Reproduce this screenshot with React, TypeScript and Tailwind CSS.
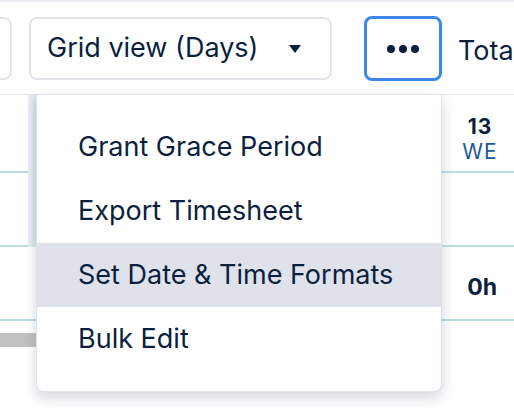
const MENU = ["Grant Grace Period", "Export Timesheet", "Set Date & Time Formats", "Bulk Edit"];

export default function App() {
  return (
    <div className="relative h-[408px] w-[514px] overflow-hidden bg-white font-['Inter',sans-serif] text-[#0b1f3f]">
      <div className="h-[2px] bg-[#eceef3]" />

      {/* toolbar */}
      <div className="flex h-[93px] items-start border-b border-[#e3e6ec] pt-[15px]">
        <div className="-ml-[100px] h-[63px] w-[112px] shrink-0 rounded-[8px] border-2 border-[#e1e4ea]" />
        <button className="ml-[17px] flex h-[63px] w-[303px] shrink-0 items-center justify-between rounded-[8px] border-2 border-[#e1e4ea] pl-[16px] pr-[29px] text-[27px]">
          <span>Grid view (Days)</span>
          <svg width="12" height="8" viewBox="0 0 12 8">
            <path d="M0 0h12L6 8z" fill="#0b1f3f" />
          </svg>
        </button>
        <button className="ml-[32px] flex h-[65px] w-[78px] shrink-0 -translate-y-[1px] items-center justify-center gap-[4px] rounded-[8px] border-[3px] border-[#3e87e8]">
          <span className="h-[8px] w-[8px] rounded-full bg-[#0b1f3f]" />
          <span className="h-[8px] w-[8px] rounded-full bg-[#0b1f3f]" />
          <span className="h-[8px] w-[8px] rounded-full bg-[#0b1f3f]" />
        </button>
        <span className="ml-[16px] mt-[14px] whitespace-nowrap text-[27px]">Total</span>
      </div>

      {/* grid rows */}
      <div className="relative">
        <div className="absolute left-[28px] top-0 h-[152px] w-[8px] bg-gradient-to-r from-[#eef1f5] to-[#dbe2ea]" />
        <div className="flex h-[78px] border-b-2 border-[#bcdbe2]">
          <div className="flex-1" />
          <div className="flex w-[66px] flex-col items-center pr-[2px] pt-[20px] text-[21px] leading-[23px]">
            <span className="font-bold tracking-[1px]">13</span>
            <span className="mt-[2px] tracking-[1px] text-[#17589a]">WE</span>
          </div>
        </div>
        <div className="h-[74px] border-b-2 border-[#bcdbe2]" />
        <div className="flex h-[74px] items-center justify-end border-b-2 border-[#bcdbe2] pr-[17px] pt-[9px]">
          <span className="text-[23px] font-bold">0h</span>
        </div>
        <div className="mt-[12px] h-[14px] w-[36px] bg-[#c1c1c1]" />
      </div>

      {/* overflow menu */}
      <div className="absolute left-[36px] top-[94px] w-[406px] rounded-b-[8px] border border-[#dde1e8] bg-white py-[20px] shadow-[0_6px_14px_rgba(9,30,66,0.18)]">
        {MENU.map((label) => (
          <div
            key={label}
            className={`flex h-[64px] items-center pl-[41px] text-[27px] ${label.startsWith("Set") ? "bg-[#dfe2eb]" : ""}`}
          >
            {label}
          </div>
        ))}
      </div>
    </div>
  );
}
